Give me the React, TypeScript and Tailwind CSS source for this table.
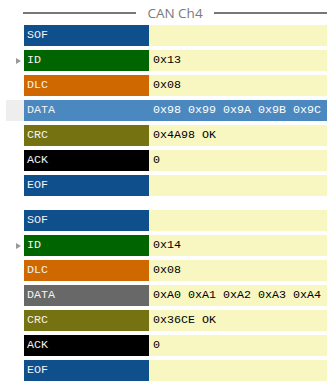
import React from "react";

type Field = { label: string; value?: string; color: string };

const mono = { fontFamily: '"Liberation Mono", "Courier New", monospace' };

const frames: { fields: Field[]; selected: boolean }[] = [
  {
    selected: true,
    fields: [
      { label: "SOF", color: "bg-[#0f4f8c]" },
      { label: "ID", value: "0x13", color: "bg-[#006400]" },
      { label: "DLC", value: "0x08", color: "bg-[#d06800]" },
      { label: "DATA", value: "0x98 0x99 0x9A 0x9B 0x9C", color: "bg-[#4b88c0]" },
      { label: "CRC", value: "0x4A98 OK", color: "bg-[#757311]" },
      { label: "ACK", value: "0", color: "bg-black" },
      { label: "EOF", color: "bg-[#0f4f8c]" },
    ],
  },
  {
    selected: false,
    fields: [
      { label: "SOF", color: "bg-[#0f4f8c]" },
      { label: "ID", value: "0x14", color: "bg-[#006400]" },
      { label: "DLC", value: "0x08", color: "bg-[#d06800]" },
      { label: "DATA", value: "0xA0 0xA1 0xA2 0xA3 0xA4", color: "bg-[#686868]" },
      { label: "CRC", value: "0x36CE OK", color: "bg-[#757311]" },
      { label: "ACK", value: "0", color: "bg-black" },
      { label: "EOF", color: "bg-[#0f4f8c]" },
    ],
  },
];

function Row({ field, selected }: { field: Field; selected: boolean }) {
  const isSel = selected && field.label === "DATA";
  return (
    <div className="flex h-[21px]">
      <div className="w-[24px] flex justify-end">
        <div
          className={`w-[18px] h-full flex items-center justify-end pr-[3px] ${
            isSel ? "bg-[#eeeeee]" : ""
          }`}
        >
          {field.label === "ID" && (
            <span className="block w-0 h-0 border-y-[3.5px] border-y-transparent border-l-[5px] border-l-[#999999]" />
          )}
        </div>
      </div>
      <div
        className={`w-[125px] ${field.color} text-[#f2f2f2] text-[11.67px] flex items-center pl-[3px]`}
        style={mono}
      >
        {field.label}
      </div>
      <div
        className={`w-[178px] flex items-center pl-[4px] text-[11.67px] whitespace-pre ${
          isSel ? "bg-[#4b88c0] text-white" : "bg-[#f8f7c1] text-black"
        }`}
        style={mono}
      >
        {field.value ?? ""}
      </div>
    </div>
  );
}

export default function App() {
  return (
    <div className="w-[335px] h-[390px] bg-white overflow-hidden">
      <div className="flex items-center h-[25px] pl-[23px] pr-[8px]">
        <div className="flex-1 h-[2px] bg-[#777777]" />
        <span
          className="px-[11px] text-[13.5px] text-[#7a7a7a] leading-none pt-[3px]"
          style={{ fontFamily: '"Open Sans", "Noto Sans", sans-serif' }}
        >
          CAN Ch4
        </span>
        <div className="flex-1 h-[2px] bg-[#777777]" />
      </div>
      <div className="flex flex-col gap-[14px]">
        {frames.map((fr, i) => (
          <div key={i} className="flex flex-col gap-[4px]">
            {fr.fields.map((f) => (
              <Row key={f.label} field={f} selected={fr.selected} />
            ))}
          </div>
        ))}
      </div>
    </div>
  );
}
